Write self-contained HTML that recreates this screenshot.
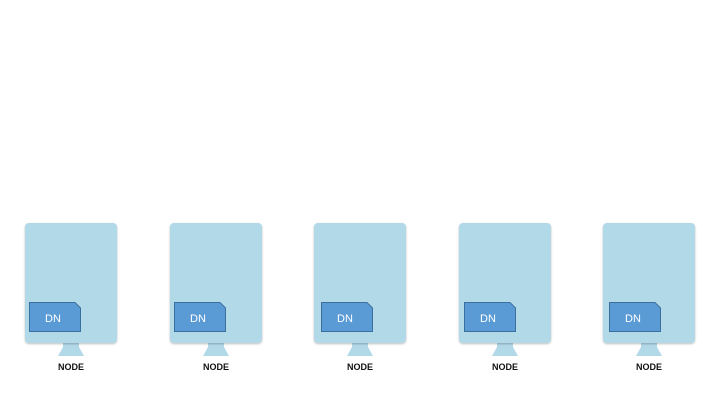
<!DOCTYPE html><html><head><style>
body{margin:0;width:720px;height:405px;background:#fff;position:relative;overflow:hidden;font-family:"Liberation Sans",sans-serif}
.n{position:absolute;top:223px;width:92px;height:140px}
.m{position:absolute;left:0;top:0;width:92px;height:120px;background:#b2d9e8;border-radius:4px;box-shadow:0 1px 2px rgba(0,0,0,.25)}
.d{position:absolute;left:4px;top:79px;width:52px;height:30px}
.l{position:absolute;left:0;width:92px;top:139px;text-align:center;font-size:9px;font-weight:bold;color:#111}
</style></head><body>
<div class="n" style="left:25px"><svg style="position:absolute;left:32px;top:118px" width="28" height="16"><path d="M6 0H22V6L27 15H1L6 6Z" fill="#b2d9e8"/></svg><div class="m"></div><svg class="d" viewBox="0 0 52 30"><path d="M0.5 0.5H46L51.5 6V29.5H0.5Z" fill="#5b9bd5" stroke="#3b6f9e"/><text x="24" y="20" font-size="11" fill="#fff" text-anchor="middle" font-family="Liberation Sans">DN</text></svg><div class="l">NODE</div></div>
<div class="n" style="left:170px"><svg style="position:absolute;left:32px;top:118px" width="28" height="16"><path d="M6 0H22V6L27 15H1L6 6Z" fill="#b2d9e8"/></svg><div class="m"></div><svg class="d" viewBox="0 0 52 30"><path d="M0.5 0.5H46L51.5 6V29.5H0.5Z" fill="#5b9bd5" stroke="#3b6f9e"/><text x="24" y="20" font-size="11" fill="#fff" text-anchor="middle" font-family="Liberation Sans">DN</text></svg><div class="l">NODE</div></div>
<div class="n" style="left:314px"><svg style="position:absolute;left:32px;top:118px" width="28" height="16"><path d="M6 0H22V6L27 15H1L6 6Z" fill="#b2d9e8"/></svg><div class="m"></div><svg class="d" style="left:7px" viewBox="0 0 52 30"><path d="M0.5 0.5H46L51.5 6V29.5H0.5Z" fill="#5b9bd5" stroke="#3b6f9e"/><text x="24" y="20" font-size="11" fill="#fff" text-anchor="middle" font-family="Liberation Sans">DN</text></svg><div class="l">NODE</div></div>
<div class="n" style="left:459px"><svg style="position:absolute;left:32px;top:118px" width="28" height="16"><path d="M6 0H22V6L27 15H1L6 6Z" fill="#b2d9e8"/></svg><div class="m"></div><svg class="d" style="left:5px" viewBox="0 0 52 30"><path d="M0.5 0.5H46L51.5 6V29.5H0.5Z" fill="#5b9bd5" stroke="#3b6f9e"/><text x="24" y="20" font-size="11" fill="#fff" text-anchor="middle" font-family="Liberation Sans">DN</text></svg><div class="l">NODE</div></div>
<div class="n" style="left:603px"><svg style="position:absolute;left:32px;top:118px" width="28" height="16"><path d="M6 0H22V6L27 15H1L6 6Z" fill="#b2d9e8"/></svg><div class="m"></div><svg class="d" style="left:6px" viewBox="0 0 52 30"><path d="M0.5 0.5H46L51.5 6V29.5H0.5Z" fill="#5b9bd5" stroke="#3b6f9e"/><text x="24" y="20" font-size="11" fill="#fff" text-anchor="middle" font-family="Liberation Sans">DN</text></svg><div class="l">NODE</div></div>
</body></html>
